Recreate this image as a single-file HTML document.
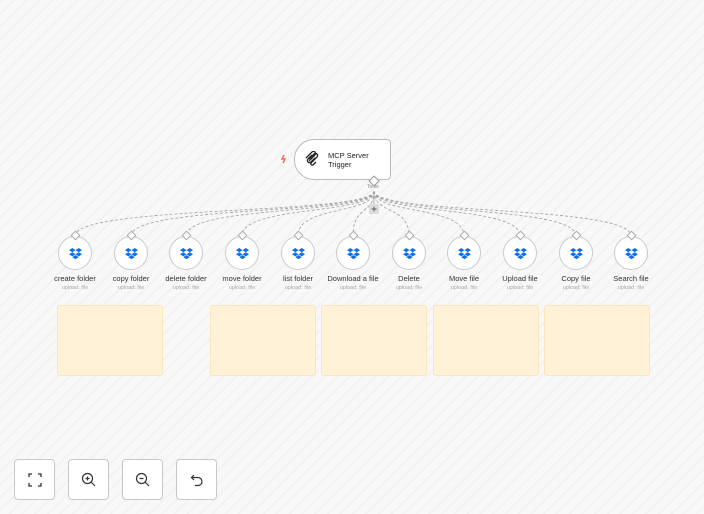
<!DOCTYPE html>
<html><head><meta charset="utf-8"><style>
body{margin:0;width:704px;height:514px;overflow:hidden;font-family:"Liberation Sans",sans-serif;
background:#f7f7f7 repeating-linear-gradient(135deg,#f2f2f2 0 2px,#f8f8f8 2px 9px);position:relative}
.note{position:absolute;top:305px;height:71px;background:#fff2d6;border:1px solid #f8e6bd;border-radius:3px;box-sizing:border-box}
.n{position:absolute;width:34px;height:34px;border:1px solid #c9c9c9;border-radius:50%;background:#fff;box-sizing:border-box;display:flex;align-items:center;justify-content:center}
.l{position:absolute;width:90px;text-align:center;font-size:7.5px;color:#333}
.s{position:absolute;width:90px;text-align:center;font-size:5.5px;color:#aaa}
.btn{position:absolute;top:459px;width:41px;height:41px;border:1px solid #c8c8c8;border-radius:4px;background:#fff;box-sizing:border-box;display:flex;align-items:center;justify-content:center}
</style></head><body>
<div class="note" style="left:57px;width:106px"></div>
<div class="note" style="left:210px;width:106px"></div>
<div class="note" style="left:321px;width:106px"></div>
<div class="note" style="left:433px;width:106px"></div>
<div class="note" style="left:544px;width:106px"></div>
<svg width="704" height="514" style="position:absolute;left:0;top:0">
<g fill="none" stroke="#a0a0a0" stroke-width="0.8" stroke-dasharray="3,2">
<path d="M374 191 C374 215,75 205,75 236"/><path d="M374 191 C374 215,131 205,131 236"/>
<path d="M374 191 C374 215,186 205,186 236"/><path d="M374 191 C374 215,242 205,242 236"/>
<path d="M374 191 C374 215,298 205,298 236"/><path d="M374 191 C374 215,353 205,353 236"/>
<path d="M374 191 C374 215,409 205,409 236"/><path d="M374 191 C374 215,464 205,464 236"/>
<path d="M374 191 C374 215,520 205,520 236"/><path d="M374 191 C374 215,576 205,576 236"/>
<path d="M374 191 C374 215,631 205,631 236"/>
</g>
<line x1="374" y1="191" x2="374" y2="204" stroke="#a0a0a0" stroke-width="0.8"/>
<rect x="369" y="204" width="10" height="10" rx="1.5" fill="#dcdcdc"/>
<path d="M371.5 209h5M374 206.5v5" stroke="#555" stroke-width="0.9"/>
<path d="M284 155l-2 4h3l-2 4" stroke="#f26b5b" stroke-width="1.5" fill="none"/>
</svg>
<div style="position:absolute;left:294px;top:139px;width:97px;height:41px;background:#fff;border:1px solid #bbb;border-radius:20px 4px 4px 20px;box-sizing:border-box"></div>
<svg style="position:absolute;left:304px;top:151px" width="16" height="16" viewBox="0 0 16 16" fill="none" stroke="#222" stroke-width="1.3"><path d="M2 7l6-6a2 2 0 013 3L5 10M5 8l5-5a2 2 0 013 3l-6 6a1.5 1.5 0 002 2l3-3M8 4l-4 4a2 2 0 003 3l4-4"/></svg>
<div style="position:absolute;left:328px;top:151px;font-size:7.5px;color:#222;line-height:9px">MCP Server<br>Trigger</div>
<div style="position:absolute;left:370px;top:177px;width:6px;height:6px;background:#fff;border:1px solid #999;transform:rotate(45deg)"></div>
<div style="position:absolute;left:367px;top:184px;font-size:5px;color:#888">Tools</div>
<div id="nodes"></div>
<script>
var xs=[75,131,186,242,298,353,409,464,520,576,631];
var ls=["create folder","copy folder","delete folder","move folder","list folder","Download a file","Delete","Move file","Upload file","Copy file","Search file"];
var h="";
xs.forEach(function(x,i){
h+='<div class="n" style="left:'+(x-17)+'px;top:236px"><svg width="13" height="11" viewBox="0 0 26 22" fill="#0f6fe6"><path d="M6.5 0L0 4.2l6.5 4.2L13 4.2zM19.5 0L13 4.2l6.5 4.2L26 4.2zM0 12.6l6.5 4.2 6.5-4.2-6.5-4.2zM19.5 8.4L13 12.6l6.5 4.2 6.5-4.2zM6.5 18.2L13 22.4l6.5-4.2L13 14z"/></svg></div>';
h+='<div style="position:absolute;left:'+(x-3)+'px;top:232px;width:5px;height:5px;background:#fff;border:1px solid #aaa;transform:rotate(45deg)"></div>';
h+='<div class="l" style="left:'+(x-45)+'px;top:274px">'+ls[i]+'</div>';
h+='<div class="s" style="left:'+(x-45)+'px;top:285px">upload: file</div>';
});
document.getElementById("nodes").innerHTML=h;
</script>
<div class="btn" style="left:14px"><svg width="14" height="14" viewBox="0 0 14 14" fill="none" stroke="#333" stroke-width="1.3"><path d="M1 4V1h3M10 1h3v3M13 10v3h-3M4 13H1v-3"/></svg></div>
<div class="btn" style="left:68px"><svg width="15" height="15" viewBox="0 0 15 15" fill="none" stroke="#333" stroke-width="1.2"><circle cx="6.5" cy="6.5" r="5"/><path d="M10 10l4 4M6.5 4.5v4M4.5 6.5h4"/></svg></div>
<div class="btn" style="left:122px"><svg width="15" height="15" viewBox="0 0 15 15" fill="none" stroke="#333" stroke-width="1.2"><circle cx="6.5" cy="6.5" r="5"/><path d="M10 10l4 4M4.5 6.5h4"/></svg></div>
<div class="btn" style="left:176px"><svg width="14" height="14" viewBox="0 0 14 14" fill="none" stroke="#333" stroke-width="1.2"><path d="M4 2L1.5 4.5 4 7M1.5 4.5H8a4 4 0 010 8H5"/></svg></div>
</body></html>
